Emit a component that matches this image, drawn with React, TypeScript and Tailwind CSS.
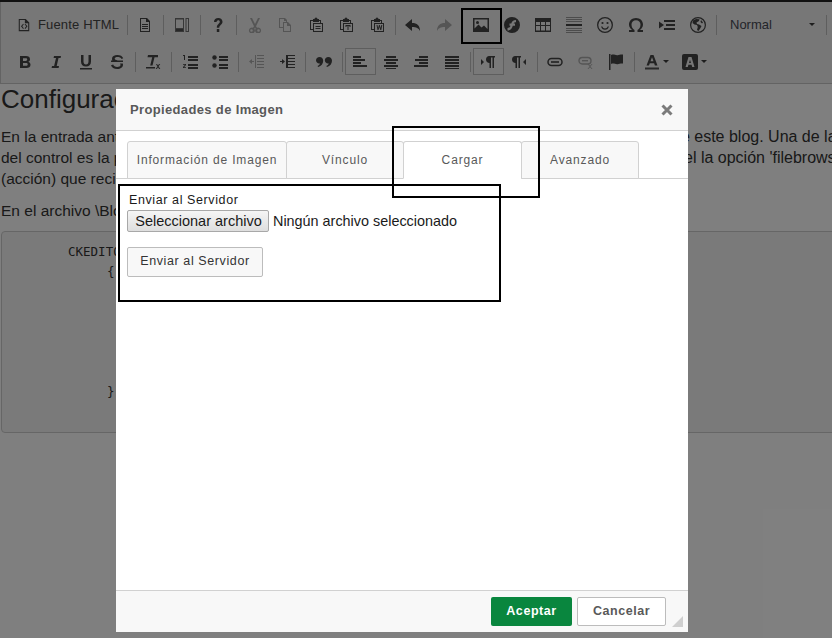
import React from "react";

const S = ({ children, w = 16, h = 16, vb }: { children: React.ReactNode; w?: number; h?: number; vb?: string }) => (
  <svg width={w} height={h} viewBox={vb ?? `0 0 ${w} ${h}`} fill="currentColor">{children}</svg>
);
const B = "text-[#444444]";
const D = "text-[#ababab]";

const L = ({ y, x = 1, w = 14, h = 2, o = 1 }: { y: number; x?: number; w?: number; h?: number; o?: number }) => <rect x={x} y={y} width={w} height={h} opacity={o} />;

const clip = "M5 2h1.500a1.500 1.500 0 0 1 3 0H11v1h2v3h2v9H5v-2H2V3h3zM3 4v8h2V6h7V4h-1v1H5V4zM6 7v7h8V7z";

const icons: Record<string, React.ReactNode> = {
  source: <S><path fillRule="evenodd" d="M2 1h8l4 4v10H2zM3.200 2.200v11.600h9.600V6H9V2.200z" /><path d="M7 6.500 4.500 9.500 7 12.500l.8-.7-1.800-2.300 1.800-2.300zM9.500 6.500l2.500 3-2.500 3-.8-.7 1.800-2.300-1.800-2.300z" /></S>,
  doc: <S><path fillRule="evenodd" d="M3 1h7l3 3v11H3zM4 2v12h8V5H9V2z" /><rect x="5" y="7" width="6" height="1" /><rect x="5" y="9" width="6" height="1" /><rect x="5" y="11" width="6" height="1" /></S>,
  templates: <S><path fillRule="evenodd" opacity=".75" d="M1 1h9v14H1zM2 2.500V11h7V2.500zM11.500 1h3.500v14h-3.500zM12.500 2v12H14V2z" /><rect x="2" y="12" width="7" height="2" opacity=".75" /></S>,
  help: <S><path d="M4 5c0-2.500 1.800-4 4.300-4S12.500 2.500 12.500 4.700c0 3-3.200 3.300-3.200 6H6.800c0-3.500 3-4 3-6 0-.9-.6-1.500-1.500-1.500-1 0-1.700.7-1.700 1.800zM6.800 12h2.500v3H6.800z" /></S>,
  cut: <S><path d="M3 1h2l3 6 3-6h2L9 9.200l1 1.600a3 3 0 1 1-1.300 1L8 10.500l-.7 1.300a3 3 0 1 1-1.300-1l1-1.600zM4.500 12.200a1.300 1.300 0 1 0 0 2.600 1.300 1.300 0 0 0 0-2.600zm7 0a1.300 1.300 0 1 0 0 2.600 1.300 1.300 0 0 0 0-2.600z" /></S>,
  copy: <S><path fillRule="evenodd" d="M2 1h6l2 2v2h1l3 3v7H6v-4H2zM3 2v8h3V5h3V4H7V2zM7 6v8h6V9h-3V6z" /></S>,
  paste: <S><path fillRule="evenodd" d={clip} /><rect x="7.500" y="9" width="5" height="1" /><rect x="7.500" y="11" width="5" height="1" /></S>,
  pastetext: <S><path fillRule="evenodd" d={clip} /><path d="M7.500 8h5v2h-1V9h-1v4h-1V9h-1v1h-1z" /></S>,
  pasteword: <S><path fillRule="evenodd" d={clip} /><path d="M7.500 8h1l.6 3 .9-3h.8l.9 3 .6-3h1l-1 5h-1l-.9-3-.9 3h-1z" /></S>,
  undo: <S><path d="M7 2v4c5 0 8 2.500 8 8-1.500-3-3.500-4-8-4v4L0 8z" /></S>,
  redo: <S><path d="M9 2v4C4 6 1 8.500 1 14c1.500-3 3.500-4 8-4v4l7-6z" /></S>,
  image: <S><path fillRule="evenodd" d="M0 1h16v14H0zM1.500 2.500v9l4-4 3 3 2.500-2 3.500 3.500V2.500z" /><circle cx="4.500" cy="5.500" r="1.500" /></S>,
  flash: <S><path fillRule="evenodd" d="M8 0a8 8 0 1 1 0 16A8 8 0 0 1 8 0zm4 3C9 3 8 4.500 7.300 6.500H5.500v2.300h1c-.5 1.500-1.300 2.200-3 2.200v2.500c3.200 0 4.500-2 5.300-4.700H11V6.500H9.600C10 5.600 10.800 5.300 12 5.300z" /></S>,
  table: <S><path fillRule="evenodd" d="M0 1h16v14H0zM1 5v3h4V5zM6 5v3h4V5zM11 5v3h4V5zM1 9v4.500h4V9zM6 9v4.500h4V9zM11 9v4.500h4V9z" /></S>,
  hr: <S><L y={0} x={0} w={16} h={1} o={0.5} /><L y={2} x={0} w={16} h={1} o={0.5} /><L y={4} x={0} w={16} h={1} o={0.5} /><L y={7} x={0} w={16} h={2} /><L y={11} x={0} w={16} h={1} o={0.5} /><L y={13} x={0} w={16} h={1} o={0.5} /><L y={15} x={0} w={16} h={1} o={0.5} /></S>,
  smiley: <S><path fillRule="evenodd" d="M8 0a8 8 0 1 1 0 16A8 8 0 0 1 8 0zm0 1.300a6.700 6.700 0 1 0 0 13.400A6.700 6.700 0 0 0 8 1.300z" /><circle cx="5.500" cy="6" r="1.100" /><circle cx="10.500" cy="6" r="1.100" /><path d="M4 9.500h1.300c.5 1.200 1.500 2 2.700 2s2.200-.8 2.700-2H12c-.6 2-2 3.300-4 3.300S4.600 11.500 4 9.500z" /></S>,
  omega: <S><path d="M1 15v-2h3.200C2.300 11.700 1 9.800 1 7.500 1 3.800 4 1 8 1s7 2.800 7 6.500c0 2.300-1.300 4.200-3.200 5.500H15v2H9.500v-2c2-1 3-3 3-5.500 0-2.500-1.800-4.300-4.500-4.300S3.500 5 3.500 7.500c0 2.500 1 4.500 3 5.500v2z" /></S>,
  pagebreak: <S><path d="M0 4.500 5 8l-5 3.500z" /><L y={3} x={5} w={11} /><L y={7} x={7} w={9} /><L y={11} x={5} w={11} /></S>,
  globe: <S><path fillRule="evenodd" d="M8 0a8 8 0 1 1 0 16A8 8 0 0 1 8 0zm0 1.200a6.800 6.800 0 1 0 0 13.600A6.800 6.800 0 0 0 8 1.200z" /><path d="M6 2 3 3.500 2.500 6l2 1.500 2.500.5.800 2L7 13l1.500 1 2-3 1-2-2.500-1.500-2-.5-.5-1.500L9 4l.5-1.800zM11 3l2 2.500L12 6.500 10.500 5z" /></S>,
  bold: <S><path fillRule="evenodd" d="M3 2h6c2.500 0 4 1.200 4 3.200 0 1.300-.7 2.200-1.800 2.600 1.400.4 2.300 1.500 2.300 3 0 2.100-1.600 3.200-4.200 3.200H3zM6 4.200V7h2.700c1 0 1.500-.5 1.500-1.400s-.5-1.400-1.500-1.400zM6 9v2.800h3c1.100 0 1.700-.5 1.700-1.400S10.100 9 9 9z" /></S>,
  italic: <S><path d="M6 2h7l-.4 2H10.500L8.700 12H11l-.4 2h-7l.4-2h2.100L8 4H5.600z" /></S>,
  underline: <S><path d="M3 1h2.500v6.500c0 2 1 2.900 2.500 2.900s2.500-.9 2.500-2.900V1H13v6.500c0 3.300-1.900 5-5 5s-5-1.700-5-5z" /><rect x="2" y="14" width="12" height="1.500" /></S>,
  strike: <S><path d="M12.500 5C12 3.600 10.300 3 8.500 3c-1.600 0-2.800.5-2.800 1.600 0 1 1 1.400 3 1.800H14v1.700H2V6.400h1.400C3.100 5.900 3 5.300 3 4.700 3 2.300 5.300 1 8.300 1c2.900 0 5.200 1.200 5.900 3.300zM11 9.500h2.800c.1.400.2.800.2 1.300 0 2.700-2.400 4.200-5.700 4.200-3.300 0-5.700-1.400-6.300-3.800l2.200-.6c.4 1.500 2 2.300 4 2.300 1.900 0 3.300-.6 3.300-1.900 0-.6-.2-1.100-.5-1.500z" /></S>,
  clear: <S><path d="M3 1h10v2.200H9.500L7.500 11.500H5.200L7.200 3.200H2.500z" /><rect x="1" y="13" width="9" height="1.500" /><path d="m11 10 1 0 1 1.500L14 10h1.200l-1.600 2.300 1.700 2.700h-1.200l-1.100-1.800-1.100 1.800h-1.200l1.700-2.600z" /></S>,
  ol: <S><path d="M1 1h2v5H2V2H1zM1 10h3v1L2 13.200h2V14H1v-1l2-2.200V10.800H1z" /><L y={2} x={6} w={10} /><L y={5} x={6} w={10} /><L y={10} x={6} w={10} /><L y={13} x={6} w={10} /></S>,
  ul: <S><circle cx="2.500" cy="3.500" r="2.200" /><circle cx="2.500" cy="11.500" r="2.200" /><L y={2} x={7} w={9} /><L y={5} x={7} w={9} /><L y={10} x={7} w={9} /><L y={13} x={7} w={9} /></S>,
  outdent: <S><L y={1} x={8} w={7} h={1} /><L y={4} x={8} w={7} h={1} /><L y={7} x={8} w={7} h={1} /><L y={10} x={8} w={7} h={1} /><L y={13} x={8} w={7} h={1} /><rect x="6" y="1" width="1" height="13" /><path d="M0 7.500 3 5v2h2v1H3v2z" /></S>,
  indent: <S><L y={1} x={9} w={7} h={1} /><L y={4} x={9} w={7} h={1} /><L y={7} x={9} w={7} h={1} /><L y={10} x={9} w={7} h={1} /><L y={13} x={9} w={7} h={1} /><rect x="7" y="1" width="2" height="13" /><path d="M6 7.500 3 5v2H1v1h2v2z" /></S>,
  quote: <S><path d="M3.500 3C1.500 3 0 4.500 0 6.300s1.500 3.200 3.200 3.200c.3 0 .6 0 .8-.1-.3 1.100-1.200 2-2.500 2.600l.7 1c3-1 5-3.300 5-6.300C7.200 4.500 5.700 3 3.500 3zM12.300 3c-2 0-3.500 1.500-3.500 3.300s1.500 3.200 3.200 3.200c.3 0 .6 0 .8-.1-.3 1.100-1.200 2-2.500 2.600l.7 1c3-1 5-3.300 5-6.300C16 4.500 14.500 3 12.300 3z" /></S>,
  left: <S><L y={2} x={1} w={8} /><L y={5} x={1} w={12} /><L y={8} x={1} w={8} /><L y={11} x={1} w={14} /></S>,
  center: <S><L y={2} x={3} w={10} /><L y={5} x={1} w={14} /><L y={8} x={3} w={10} /><L y={11} x={1} w={14} /><L y={14} x={3} w={10} h={1} /></S>,
  right: <S><L y={2} x={6} w={9} /><L y={5} x={2} w={13} /><L y={8} x={6} w={9} /><L y={11} x={1} w={14} /></S>,
  justify: <S><L y={2} /><L y={5} /><L y={8} /><L y={11} /><L y={14} h={1} /></S>,
  ltr: <S><path d="M1 5l3 3-3 3zM9 2h6v1.500h-1V14h-1.500V3.500H11V14H9.500V9C7.500 9 6 7.500 6 5.500S7.500 2 9 2z" /></S>,
  rtl: <S><path d="M4 2h6v1.500H9V14H7.500V3.500H6V14H4.500V9C2.500 9 1 7.500 1 5.500S2.500 2 4 2zM15 5l-3 3 3 3z" /></S>,
  link: <S><rect x="1" y="4.500" width="14" height="7" rx="3.500" fill="none" stroke="currentColor" strokeWidth="1.500" /><rect x="4" y="7.200" width="8" height="1.600" /></S>,
  unlink: <S><rect x="1" y="3.500" width="12" height="6.500" rx="3.200" fill="none" stroke="currentColor" strokeWidth="1.400" /><rect x="4" y="6" width="6" height="1.400" /><path d="m9.500 10 1 0 1.500 1.800L13.500 10h1l-2 2.500 2 2.500h-1L12 13.200 10.500 15h-1l2-2.500z" /></S>,
  flag: <S><rect x="1" y="0" width="1.500" height="16" /><path d="M3 1c3-1.500 4.500 1 7.500 0 1.500-.5 3-.5 4.500-.5v9c-1.500 0-3 0-4.500.5-3 1-4.500-1.500-7.500 0z" /></S>,
  color: <S h={16}><path fillRule="evenodd" d="M6.500 1h3l4 10.500h-2.600l-.8-2.300H5.800L5 11.500H2.500zM6.500 7.200h3L8 3.200z" /><rect x="1" y="13.500" width="14" height="2" fill="#555" /></S>,
  bgcolor: <S><path fillRule="evenodd" d="M2 0h12a2 2 0 0 1 2 2v12a2 2 0 0 1-2 2H2a2 2 0 0 1-2-2V2a2 2 0 0 1 2-2zm4.500 3-3 10h2.300l.6-2.200h3.200l.6 2.200h2.300L9.500 3zm1.500 2.800L9 9H7z" /></S>,
};

const Btn = ({ i, off, on, wide }: { i: string; off?: boolean; on?: boolean; wide?: boolean }) => (
  <div className={`flex h-[27px] ${wide ? "w-[31px]" : "w-[30.5px]"} shrink-0 items-center justify-center ${off ? D : B} ${on ? "border border-[#bcbcbc] bg-[#f2f2f2]" : ""}`}>
    {icons[i]}
  </div>
);
const Sep = ({ hide }: { hide?: boolean }) => (
  <div className="flex h-[27px] w-[6px] shrink-0 items-center justify-center">
    {!hide && <div className="h-[20px] w-px bg-[#bcbcbc]" />}
  </div>
);
const Caret = () => <div className="ml-[3px] h-0 w-0 border-x-[3px] border-t-[3px] border-x-transparent border-t-[#3c3c3c]" />;

const Toolbar = () => (
  <div className="border-b border-l border-[#c6c6c6] bg-[#eeeeee] pt-[9px] pb-[8px] pl-[9px] font-['Liberation_Sans',sans-serif]">
    <div className="flex items-center">
      <div className="flex h-[27px] w-[114px] shrink-0 items-center pl-[7px] text-[#444444]">
        <S w={14} h={16} vb="0 0 16 16">{icons.source}</S>
        <span className="ml-[7px] text-[13px] tracking-[0.15px] text-[#474747]">Fuente HTML</span>
      </div>
      <Sep /><Btn i="doc" /><Sep /><Btn i="templates" /><Sep /><Btn i="help" /><Sep />
      <Btn i="cut" off /><Btn i="copy" off /><Btn i="paste" /><Btn i="pastetext" /><Btn i="pasteword" /><Sep />
      <Btn i="undo" /><Btn i="redo" off /><Sep hide />
      <Btn i="image" wide /><Btn i="flash" wide /><Btn i="table" wide /><Btn i="hr" wide /><Btn i="smiley" wide /><Btn i="omega" wide /><Btn i="pagebreak" wide /><Btn i="globe" wide />
      <Sep />
      <div className="flex h-[27px] w-[104px] shrink-0 items-center justify-between pl-[11px] pr-[8px] text-[13px] text-[#474a55]">
        <span>Normal</span><Caret />
      </div>
      <Sep />
    </div>
    <div className="mt-[10px] flex items-center">
      <Btn i="bold" /><Btn i="italic" /><Btn i="underline" /><Btn i="strike" /><Sep />
      <Btn i="clear" /><Sep />
      <Btn i="ol" /><Btn i="ul" /><Sep />
      <Btn i="outdent" off /><Btn i="indent" /><Sep />
      <Btn i="quote" /><Sep />
      <Btn i="left" on /><Btn i="center" /><Btn i="right" /><Btn i="justify" /><Sep />
      <Btn i="ltr" on /><Btn i="rtl" /><Sep />
      <Btn i="link" /><Btn i="unlink" off /><Btn i="flag" /><Sep />
      <div className="flex h-[27px] w-[38px] shrink-0 items-center justify-center text-[#444444]">{icons.color}<Caret /></div>
      <div className="flex h-[27px] w-[38px] shrink-0 items-center justify-center text-[#444444]">{icons.bgcolor}<Caret /></div>
    </div>
  </div>
);

const Line = ({ left, right, x }: { left: string; right: string; x: string }) => (
  <div className="flex h-[21px] items-center whitespace-nowrap">
    <span className={`${x} shrink-0 overflow-hidden`}>{left}</span>
    <span className="text-[16px]">{right}</span>
  </div>
);

const Page = () => (
  <div className="font-['Liberation_Sans',sans-serif] text-[#333333]">
    <h1 className="ml-px h-[36px] overflow-hidden whitespace-nowrap pt-[1px] text-[26px] leading-[28px] text-[#333333]">Configuración</h1>
    <div className="ml-px mt-[6px] text-[15.5px]">
      <Line x="w-[671px]" left="En la entrada anterior vimos cómo integrar el editor CKEditor en" right="de este blog. Una de las" />
      <Line x="w-[683px]" left="del control es la posibilidad de cargar imágenes desde" right="el la opción 'filebrowserUploadUrl'" />
      <Line x="w-[683px]" left="(acción) que recibe la imagen enviada desde el cuadro de diálogo" right="" />
      <p className="mt-[10px] h-[21px] whitespace-nowrap">En el archivo \Blog\Scripts\ckeditor\config.js agregamos:</p>
    </div>
    <div className="ml-px mt-[11px] h-[202px] w-[860px] rounded-[4px] border border-[#cccccc] bg-[#f5f5f5] pt-[10px] pl-[66px] font-['DejaVu_Sans_Mono',monospace] text-[12.5px] leading-[20px]">
      <div>CKEDITOR.editorConfig = function( config )</div>
      <div className="pl-[39px]">{"{"}</div>
      <div className="h-[100px]" />
      <div className="pl-[39px]">{"}"}</div>
    </div>
  </div>
);

const Tab = ({ w, children, active }: { w: string; children: React.ReactNode; active?: boolean }) => (
  <div className={`flex h-[38px] ${w} shrink-0 items-center justify-center rounded-t-[3px] border border-[#d1d1d1] text-[12px] tracking-[0.85px] text-[#595959] ${active ? "border-b-white bg-white" : "bg-[#f8f8f8]"}`}>
    {children}
  </div>
);

const Dialog = () => (
  <div className="absolute left-[116px] top-[89px] flex h-[543px] w-[572px] flex-col bg-white font-['Liberation_Sans',sans-serif]">
    <div className="flex h-[42px] shrink-0 items-center justify-between border-b border-[#d1d1d1] bg-[#f8f8f8] pl-[14px] pr-[15px]">
      <span className="text-[13px] font-bold tracking-[0.35px] text-[#595959]">Propiedades de Imagen</span>
      <svg width="12" height="12" viewBox="0 0 12 12" className="text-[#7b7b7b]"><path d="M1.500 1.500l9 9m0-9-9 9" stroke="currentColor" strokeWidth="3" /></svg>
    </div>
    <div className="mt-[10px] flex h-[38px] shrink-0 border-b border-[#d1d1d1] pl-[11px]">
      <Tab w="w-[160px]">Información de Imagen</Tab>
      <Tab w="w-[118px] -ml-px">Vínculo</Tab>
      <Tab w="w-[119px] -ml-px" active>Cargar</Tab>
      <Tab w="w-[118px] -ml-px">Avanzado</Tab>
    </div>
    <div className="flex-1 pl-[11px] pt-[14px]">
      <div className="pl-[2px] text-[12.5px] leading-[15px] tracking-[0.6px] text-[#1a1a1a]">Enviar al Servidor</div>
      <div className="mt-[2px] flex items-center">
        <div className="flex h-[22px] w-[142px] items-center justify-center rounded-[2px] border border-[#a8a8a8] bg-linear-to-b from-[#f5f5f5] to-[#dedede] pt-px pl-px text-[14.5px] text-[#1a1a1a]">Seleccionar archivo</div>
        <span className="ml-[4px] pt-px text-[14.4px] text-[#1a1a1a]">Ningún archivo seleccionado</span>
      </div>
      <div className="mt-[14px] flex h-[30px] w-[136px] items-center justify-center rounded-[2px] border border-[#bcbcbc] bg-[#f8f8f8] text-[12.5px] tracking-[0.6px] text-[#333333]">Enviar al Servidor</div>
    </div>
    <div className="relative flex h-[42px] shrink-0 items-start justify-end gap-[5px] border-t border-[#d1d1d1] bg-[#f8f8f8] pt-[6px] pr-[22px]">
      <div className="flex h-[29px] w-[81px] items-center justify-center rounded-[2px] bg-[#09863e] text-[12.5px] font-bold tracking-[0.55px] text-white">Aceptar</div>
      <div className="flex h-[29px] w-[89px] items-center justify-center rounded-[2px] border border-[#bcbcbc] bg-white text-[12.5px] font-bold tracking-[0.55px] text-[#595959]">Cancelar</div>
      <svg width="11" height="11" viewBox="0 0 11 11" className="absolute bottom-[5px] right-[5px] text-[#cfcfcf]"><path d="M11 0v11H0z" fill="currentColor" /></svg>
    </div>
  </div>
);

export default function App() {
  return (
    <div className="relative h-[638px] w-[832px] overflow-hidden bg-white">
      <div className="h-[2px] bg-[#222222]" />
      <Toolbar />
      <Page />
      <div className="absolute inset-0 bg-black/50" />
      <Dialog />
      <div className="absolute left-[461px] top-[8px] h-[36px] w-[41px] border-2 border-black" />
      <div className="absolute left-[392px] top-[126px] h-[72px] w-[148px] border-2 border-black" />
      <div className="absolute left-[118px] top-[184px] h-[118px] w-[383px] border-2 border-black" />
    </div>
  );
}
